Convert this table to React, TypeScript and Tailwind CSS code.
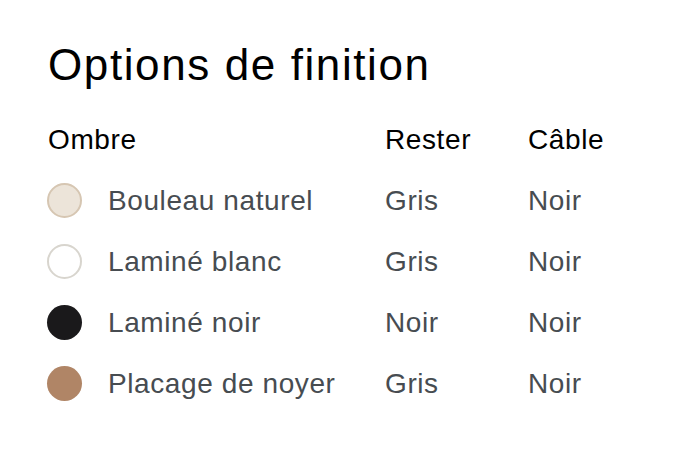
import React from 'react';

interface IFinish {
  name: string;
  swatch: string;
  stand: string;
  cable: string;
}

const finishes: IFinish[] = [
  { name: 'Bouleau naturel', swatch: 'bg-[#ece4d9] border-2 border-[#d6c6b2]', stand: 'Gris', cable: 'Noir' },
  { name: 'Laminé blanc', swatch: 'bg-white border-2 border-[#d8d5ce]', stand: 'Gris', cable: 'Noir' },
  { name: 'Laminé noir', swatch: 'bg-[#1a191b]', stand: 'Noir', cable: 'Noir' },
  { name: 'Placage de noyer', swatch: 'bg-[#b08566]', stand: 'Gris', cable: 'Noir' },
];

const cell = 'h-[61px] flex items-center text-[28px] tracking-[0.6px]';

const App: React.FC = () => {
  return (
    <div className="w-[680px] h-[454px] bg-white font-['Liberation_Sans',Arial,sans-serif] px-12 pt-[39px]">
      <h1 className="text-[44px] leading-[52px] text-black tracking-[1.6px]">
        Options de finition
      </h1>
      <div className="grid grid-cols-[337px_143px_1fr] mt-[18px]">
        <div className={`${cell} text-black`}>Ombre</div>
        <div className={`${cell} text-black tracking-[0.3px]`}>Rester</div>
        <div className={`${cell} text-black tracking-[0.3px]`}>Câble</div>
        {finishes.map((f) => (
          <React.Fragment key={f.name}>
            <div className={`${cell} gap-[26px] text-[#474c51]`}>
              <span className={`w-[35px] h-[35px] -ml-px rounded-full shrink-0 ${f.swatch}`} />
              {f.name}
            </div>
            <div className={`${cell} text-[#474c51]`}>{f.stand}</div>
            <div className={`${cell} text-[#474c51]`}>{f.cable}</div>
          </React.Fragment>
        ))}
      </div>
    </div>
  );
};

export default App;
